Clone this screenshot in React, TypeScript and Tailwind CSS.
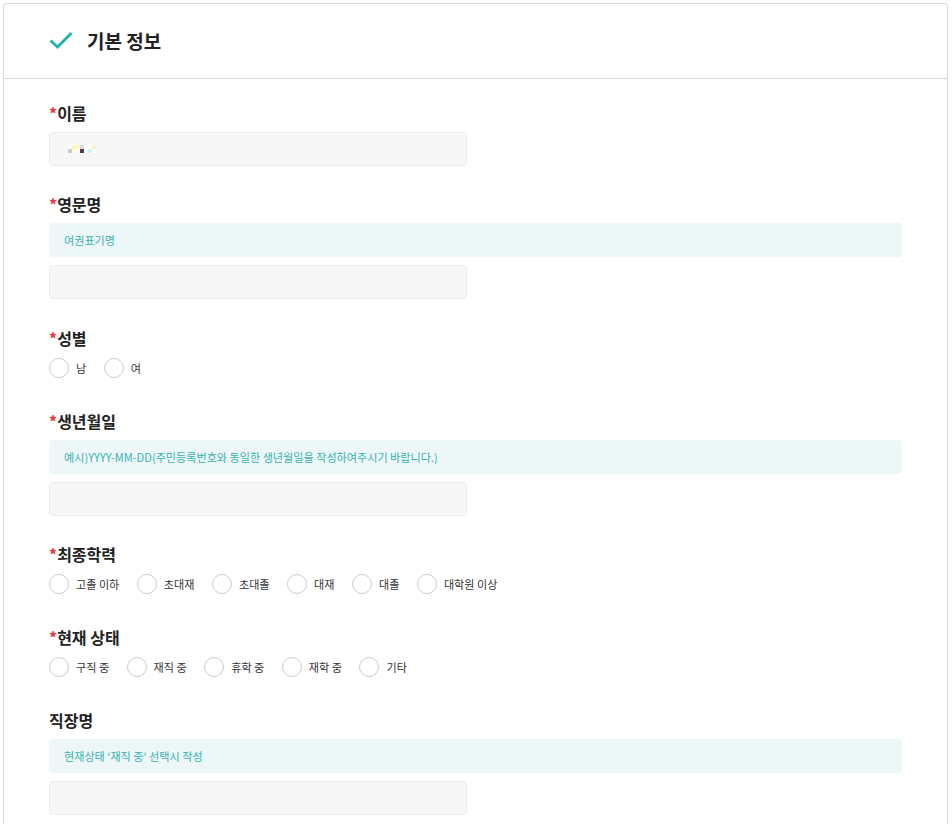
import React from "react";

const FONT = { fontFamily: '"Noto Sans CJK KR", "Noto Sans", sans-serif' };

function Label({ text, required = true }: { text: string; required?: boolean }) {
  return (
    <div className="mb-[7px] h-[24px] text-[16px] leading-[24px] font-bold text-[#222]">
      {required ? <span className="text-[#e5383b]">*</span> : null}
      {text}
    </div>
  );
}

function Hint({ text }: { text: string }) {
  return (
    <div className="mb-[8px] flex h-[34px] items-center rounded-[4px] bg-[#edf7f8] pl-[15px] text-[11.1px] text-[#38b2b0]">
      {text}
    </div>
  );
}

function Input({ children }: { children?: React.ReactNode }) {
  return (
    <div className="flex h-[34px] w-[418px] items-center rounded-[4px] border border-[#ececec] bg-[#f7f7f7]">
      {children}
    </div>
  );
}

function Radios({ options }: { options: string[] }) {
  return (
    <div className="flex h-[22px] items-center">
      {options.map((o) => (
        <label key={o} className="mr-[17.5px] flex items-center gap-[7px]">
          <span className="h-[20px] w-[20px] rounded-full border border-[#cccccc] bg-white" />
          <span className="text-[11.1px] text-[#333]">{o}</span>
        </label>
      ))}
    </div>
  );
}

// redacted name value, drawn as a few blurred pixels
const PIXELS: [string, string][] = [
  ["#ffffff", "#cccccc"],
  ["#fbf5c4", "#fdf8d6"],
  ["#fbf5c4", "#ffffff"],
  ["#dddddd", "#444444"],
  ["#ffffff", "#ffffff"],
  ["#ffffff", "#c8f4f8"],
  ["#faf3c0", "#ffffff"],
];

export default function App() {
  return (
    <div className="min-h-screen bg-white pt-[3px] pr-[4px] pl-[3px]" style={FONT}>
      <div className="rounded-t-[4px] border border-b-0 border-[#d6d6d6] pb-[20px]">
        <div className="flex h-[75px] items-center gap-[14px] border-b border-[#d6d6d6] pl-[45px]">
          <svg width="24" height="24" viewBox="0 0 24 24" fill="none">
            <polyline
              points="1.5,11.5 8.5,18 22.5,4"
              stroke="#26b3ae"
              strokeWidth="3"
              strokeLinecap="butt"
              strokeLinejoin="miter"
            />
          </svg>
          <h2 className="text-[19px] font-bold text-[#222]">기본 정보</h2>
        </div>

        <div className="px-[45px] pt-[22px]">
          <div className="mb-[26px]">
            <Label text="이름" />
            <Input>
              <div className="ml-[18px] flex">
                {PIXELS.map(([a, b], i) => (
                  <div key={i} className="flex flex-col">
                    <span className="h-[4px] w-[4px]" style={{ background: a }} />
                    <span className="h-[4px] w-[4px]" style={{ background: b }} />
                  </div>
                ))}
              </div>
            </Input>
          </div>

          <div className="mb-[27px]">
            <Label text="영문명" />
            <Hint text="여권표기명" />
            <Input />
          </div>

          <div className="mb-[30px]">
            <Label text="성별" />
            <Radios options={["남", "여"]} />
          </div>

          <div className="mb-[26px]">
            <Label text="생년월일" />
            <Hint text="예시)YYYY-MM-DD(주민등록번호와 동일한 생년월일을 작성하여주시기 바랍니다.)" />
            <Input />
          </div>

          <div className="mb-[30px]">
            <Label text="최종학력" />
            <Radios options={["고졸 이하", "초대재", "초대졸", "대재", "대졸", "대학원 이상"]} />
          </div>

          <div className="mb-[30px]">
            <Label text="현재 상태" />
            <Radios options={["구직 중", "재직 중", "휴학 중", "재학 중", "기타"]} />
          </div>

          <div className="mb-[26px]">
            <Label text="직장명" required={false} />
            <Hint text="현재상태 '재직 중' 선택시 작성" />
            <Input />
          </div>
        </div>
      </div>
    </div>
  );
}
